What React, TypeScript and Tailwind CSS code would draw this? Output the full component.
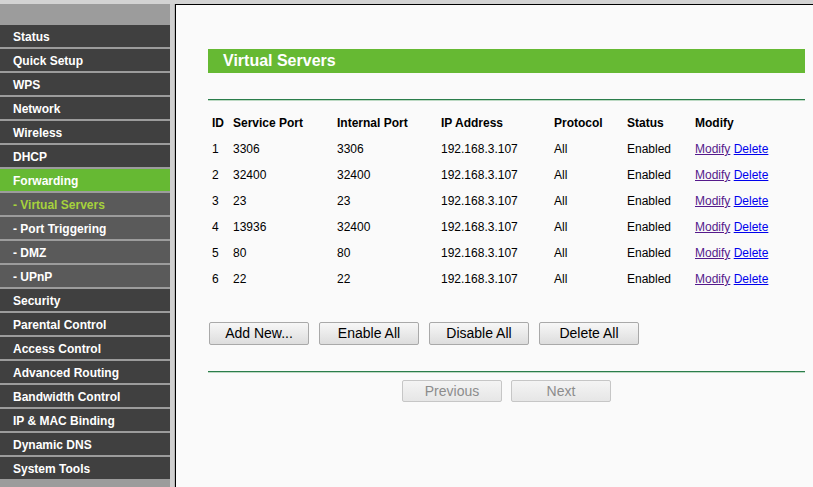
type MenuItem = {
    label: string
    sub?: boolean
    active?: boolean
    current?: boolean
}

type Rule = {
    id: number
    service: string
    internal: string
    ip: string
    protocol: string
    status: string
}

const menu: MenuItem[] = [
    { label: "Status" },
    { label: "Quick Setup" },
    { label: "WPS" },
    { label: "Network" },
    { label: "Wireless" },
    { label: "DHCP" },
    { label: "Forwarding", active: true },
    { label: "- Virtual Servers", sub: true, current: true },
    { label: "- Port Triggering", sub: true },
    { label: "- DMZ", sub: true },
    { label: "- UPnP", sub: true },
    { label: "Security" },
    { label: "Parental Control" },
    { label: "Access Control" },
    { label: "Advanced Routing" },
    { label: "Bandwidth Control" },
    { label: "IP & MAC Binding" },
    { label: "Dynamic DNS" },
    { label: "System Tools" }
]

const rules: Rule[] = [
    { id: 1, service: "3306", internal: "3306", ip: "192.168.3.107", protocol: "All", status: "Enabled" },
    { id: 2, service: "32400", internal: "32400", ip: "192.168.3.107", protocol: "All", status: "Enabled" },
    { id: 3, service: "23", internal: "23", ip: "192.168.3.107", protocol: "All", status: "Enabled" },
    { id: 4, service: "13936", internal: "32400", ip: "192.168.3.107", protocol: "All", status: "Enabled" },
    { id: 5, service: "80", internal: "80", ip: "192.168.3.107", protocol: "All", status: "Enabled" },
    { id: 6, service: "22", internal: "22", ip: "192.168.3.107", protocol: "All", status: "Enabled" }
]

const cols = "grid grid-cols-[21px_104px_104px_113px_73px_68px_1fr] items-center pl-[4px]"

function menuBg(item: MenuItem) {

    if (item.active) {
        return "bg-[#66b933] text-white"
    }

    if (item.current) {
        return "bg-[#5a5a5a] text-[#a6d23c]"
    }

    if (item.sub) {
        return "bg-[#5a5a5a] text-white"
    }

    return "bg-[#404040] text-white"
}

function Button({
    children,
    disabled = false
}: {
    children: React.ReactNode
    disabled?: boolean
}) {

    return (
        <button
            className={`
                flex
                w-[100px]
                items-center
                justify-center
                rounded-[2px]
                border
                text-[14px]
                ${disabled
                    ? "h-[22px] border-[#c6c6c6] bg-gradient-to-b from-[#f4f4f4] to-[#e6e6e6] text-[#8c8c8c]"
                    : "h-[23px] border-[#a9a9a9] bg-gradient-to-b from-[#f7f7f7] to-[#dddddd] text-black"}
            `}
        >
            {children}
        </button>
    )
}

export default function App() {

    return (
        <div
            className="
                flex
                h-[487px]
                w-[813px]
                flex-col
                overflow-hidden
                bg-[#d3d3d3]
                font-['Liberation_Sans',Arial,sans-serif]
            "
        >
            <div className="h-[4px] bg-[#d3d3d3]" />

            <div className="flex flex-1">

                <nav className="w-[170px] bg-[#9c9c9c] pt-[21px]">
                    {menu.map((item) => (
                        <div
                            key={item.label}
                            className={`
                                flex
                                h-[22px]
                                items-center
                                mb-[2px]
                                pl-[13px]
                                pt-px
                                text-[12px]
                                font-bold
                                ${menuBg(item)}
                            `}
                        >
                            {item.label}
                        </div>
                    ))}
                </nav>

                <div className="w-[4px] bg-[#cfcfcf]" />
                <div className="w-px bg-[#b4b4b4]" />

                <main
                    className="
                        flex-1
                        border-l
                        border-t
                        border-black
                        bg-[#fafafa]
                        pl-[32px]
                        pr-[8px]
                        pt-[44px]
                        text-[12px]
                        text-black
                    "
                >
                    <div
                        className="
                            flex
                            h-[24px]
                            items-center
                            bg-[#66b933]
                            pl-[15px]
                            text-[16px]
                            font-bold
                            text-white
                        "
                    >
                        Virtual Servers
                    </div>

                    <div className="mt-[26px] h-px bg-[#2b7d4b]" />
                    <div className="h-px bg-[#bcd9c3]" />

                    <div className="mt-[9px]">

                        <div className={`${cols} h-[26px] font-bold`}>
                            <div>ID</div>
                            <div>Service Port</div>
                            <div>Internal Port</div>
                            <div>IP Address</div>
                            <div>Protocol</div>
                            <div>Status</div>
                            <div>Modify</div>
                        </div>

                        {rules.map((rule) => (
                            <div
                                key={rule.id}
                                className={`${cols} h-[26px]`}
                            >
                                <div>{rule.id}</div>
                                <div>{rule.service}</div>
                                <div>{rule.internal}</div>
                                <div>{rule.ip}</div>
                                <div>{rule.protocol}</div>
                                <div>{rule.status}</div>
                                <div>
                                    <span className="text-[#551a8b] underline">Modify</span>
                                    {" "}
                                    <span className="text-[#0000ee] underline">Delete</span>
                                </div>
                            </div>
                        ))}

                    </div>

                    <div className="mt-[30px] flex gap-[10px] pl-px">
                        <Button>Add New...</Button>
                        <Button>Enable All</Button>
                        <Button>Disable All</Button>
                        <Button>Delete All</Button>
                    </div>

                    <div className="mt-[26px] h-px bg-[#2b7d4b]" />
                    <div className="h-px bg-[#bcd9c3]" />

                    <div className="mt-[7px] flex justify-center gap-[9px]">
                        <Button disabled>Previous</Button>
                        <Button disabled>Next</Button>
                    </div>
                </main>

            </div>
        </div>
    )
}
